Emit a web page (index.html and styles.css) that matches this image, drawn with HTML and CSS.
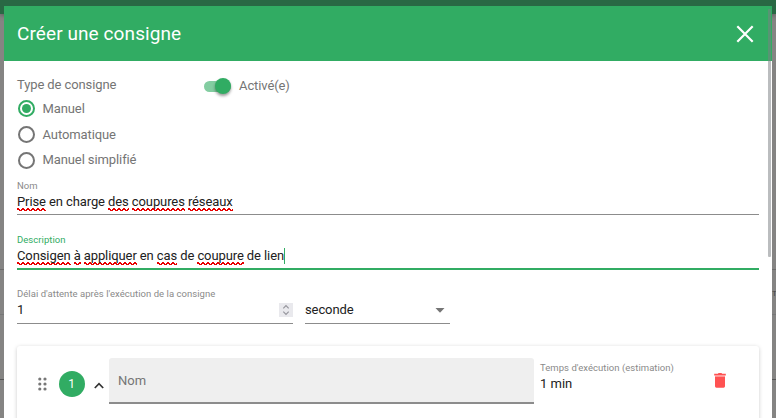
FILE: index.html
```html
<!DOCTYPE html>
<html lang="fr">
<head>
<meta charset="utf-8">
<title>Créer une consigne</title>
<link rel="stylesheet" href="styles.css">
</head>
<body>
<div class="backdrop">
  <div class="topbar"></div>
  <div class="page-row first"></div>
  <div class="page-row second"><span>T</span></div>
  <div class="page-row third"></div>
</div>
<main class="dialog">
  <header class="dialog-header">
    <h1>Créer une consigne</h1>
    <svg class="close" width="18" height="18" viewBox="0 0 18 18"><path d="M1.3 1.3 16.7 16.7M16.7 1.3 1.3 16.7"/></svg>
  </header>
  <div class="content">
    <section class="options">
      <div class="type">
        <div class="type-label">Type de consigne</div>
        <label class="option"><i class="radio checked"></i><span>Manuel</span></label>
        <label class="option"><i class="radio"></i><span>Automatique</span></label>
        <label class="option"><i class="radio"></i><span>Manuel simplifié</span></label>
      </div>
      <div class="toggle"><i class="switch"></i><span>Activé(e)</span></div>
    </section>
    <div class="field name">
      <div class="caption">Nom</div>
      <div class="value"><u>Prise</u> en charge <u>des</u> <u>coupures</u> <u>réseaux</u></div>
    </div>
    <div class="field description">
      <div class="caption">Description</div>
      <div class="value"><u>Consigen</u> <u>à</u> <u>appliquer</u> en <u>cas</u> de <u>coupure</u> de lien<i class="caret"></i></div>
    </div>
    <div class="delay">
      <div class="field number">
        <div class="caption">Délai d'attente après l'exécution de la consigne</div>
        <div class="value"><span>1</span><svg class="spinner" width="14" height="14" viewBox="0 0 14 14"><path d="M4.3 5.3 7 2.6 9.7 5.3M4.3 8.7 7 11.4 9.7 8.7"/></svg></div>
      </div>
      <div class="field unit">
        <div class="value"><span>seconde</span><svg width="10" height="5" viewBox="0 0 10 5"><path d="M.5 0h9L5 4.7z"/></svg></div>
      </div>
    </div>
    <section class="step">
      <svg class="grip" width="9" height="14" viewBox="0 0 9 14"><g><circle cx="1.8" cy="2" r="1.6"/><circle cx="7" cy="2" r="1.6"/><circle cx="1.8" cy="7" r="1.6"/><circle cx="7" cy="7" r="1.6"/><circle cx="1.8" cy="12" r="1.6"/><circle cx="7" cy="12" r="1.6"/></g></svg>
      <div class="badge">1</div>
      <svg class="chevron" width="10" height="7" viewBox="0 0 10 7"><path d="M.8 6 5 1.7 9.2 6"/></svg>
      <div class="step-name">Nom</div>
      <div class="estimate"><div class="caption">Temps d'exécution (estimation)</div><div class="minutes">1 min</div></div>
      <svg class="trash" width="12" height="15" viewBox="0 0 12 15"><path class="lid" d="M.2.8h3.6l.8-.8h2.8l.8.8h3.6v1.7H.2z"/><path class="shade" d="M1 2.5h10v2H1z"/><path d="M1 4h10v9.3a1.4 1.4 0 0 1-1.4 1.4H2.4A1.4 1.4 0 0 1 1 13.3z"/></svg>
    </section>
  </div>
  <div class="scrollbar"></div>
</main>
</body>
</html>
```

FILE: styles.css
```css
* { box-sizing: border-box; }
body {
  margin: 0;
  width: 776px;
  height: 418px;
  overflow: hidden;
  position: relative;
  font: 13px/16px Roboto, sans-serif;
  letter-spacing: -.1px;
  color: #212121;
}
i { font-style: normal; }
svg { display: block; flex: none; }
.backdrop { height: 418px; background: #858483; }
.topbar { height: 14px; background: #296844; box-shadow: 0 1px 5px #555; }
.page-row { border-bottom: 1px solid #6c6b6b; }
.first { height: 256px; }
.second { height: 45px; display: flex; justify-content: flex-end; border-color: #777; }
.second span { font-size: 8px; width: 4px; overflow: hidden; padding-top: 16px; color: #444; }
.third { height: 65px; border-color: #555; }
.dialog {
  position: absolute;
  left: 4px;
  top: 6px;
  width: 768px;
  height: 412px;
  background: #fff;
  overflow: hidden;
}
.dialog-header {
  height: 55px;
  padding: 0 18px 0 13px;
  display: flex;
  align-items: center;
  justify-content: space-between;
  background: #31ac63;
  color: #fff;
}
h1 { margin: 0; font-size: 19px; line-height: 24px; font-weight: 400; letter-spacing: .09px; }
.close { stroke: #fff; stroke-width: 2.2; fill: none; }
.content { padding: 0 13px; }
.options { display: flex; height: 119px; padding-top: 16px; color: #757575; }
.type { width: 187px; }
.type-label { height: 18px; }
.option { display: flex; align-items: center; gap: 7.5px; height: 25.7px; padding-top: 2px; }
.radio { width: 17px; height: 17px; margin-left: 1px; border: 2px solid #757575; border-radius: 50%; display: flex; align-items: center; justify-content: center; }
.checked { border-color: #31ac63; }
.checked::before { content: ""; width: 9px; height: 9px; border-radius: 50%; background: #31ac63; }
.toggle { display: flex; align-items: center; height: 18px; gap: 8px; }
.switch { width: 27px; height: 11px; border-radius: 6px; background: #83cda1; display: flex; justify-content: flex-end; align-items: center; }
.switch::after { content: ""; width: 16px; height: 16px; flex: none; border-radius: 50%; background: #31ac63; box-shadow: 0 2px 3px rgba(0,0,0,.4); }
.caption { font-size: 9.5px; line-height: 12px; letter-spacing: .04px; color: #8a8a8a; white-space: nowrap; }
.field { border-bottom: 1px solid #8c8c8c; }
.value { line-height: 16px; margin-top: 2px; }
.name { height: 35px; }
.description { height: 36px; margin-top: 19px; border-bottom: 2px solid #31ac63; }
.description .caption { color: #31ac63; }
/* Spelling marks: a three-row wave with a 5px period. */
u {
  text-decoration: none;
  padding-bottom: 2px;
  background:
    repeating-linear-gradient(90deg, #e80000 0 2px, transparent 2px 5px) 0 calc(100% - 2px) / 100% 1px no-repeat,
    repeating-linear-gradient(90deg, #e80000 0 3px, transparent 3px 4px, #e80000 4px 5px) 0 calc(100% - 1px) / 100% 1px no-repeat,
    repeating-linear-gradient(90deg, transparent 0 2px, #e80000 2px 5px) 0 100% / 100% 1px no-repeat;
}
.caret { display: inline-block; vertical-align: top; width: 1px; height: 16px; background: #31ac63; }
.delay { display: flex; gap: 12px; margin-top: 18px; }
.number { width: 276px; height: 36px; }
.unit { width: 145px; height: 36px; padding-top: 12px; }
.delay .value { display: flex; align-items: center; justify-content: space-between; }
.spinner { background: #e9e9ed; fill: none; stroke: #95959c; stroke-width: 1.2; }
.unit svg { fill: #757575; margin-right: 5px; }
.step {
  height: 100px;
  margin-top: 22px;
  padding: 12px 27px 0 20px;
  display: flex;
  border-radius: 3px;
  box-shadow: 0 1px 4px rgba(0,0,0,.2);
}
.grip { margin-top: 19px; margin-left: .5px; fill: #777; }
.badge { width: 26px; height: 26px; flex: none; margin: 13px 0 0 12px; border-radius: 50%; background: #31ac63; color: #fff; font-size: 12px; line-height: 26px; text-align: center; }
.chevron { margin: 24px 5px 0 9.5px; fill: none; stroke: #333; stroke-width: 1.7; }
.step-name { width: 425px; height: 46px; flex: none; padding: 15px 9px; border-radius: 3px 3px 0 0; border-bottom: 2px solid #8c8c8c; background: #efefef; color: #757575; letter-spacing: 0; }
.estimate { width: 179px; flex: none; padding: 4px 0 0 6px; }
.minutes { margin-top: 2px; letter-spacing: 0; }
.trash { margin-top: 15px; fill: #ff5252; margin-left: 1px; }
.trash .shade { fill: #ff9797; }
.scrollbar { position: absolute; left: 764px; top: 3px; width: 3px; height: 248px; border-radius: 1px; background: rgba(125,129,133,.52); }
```
